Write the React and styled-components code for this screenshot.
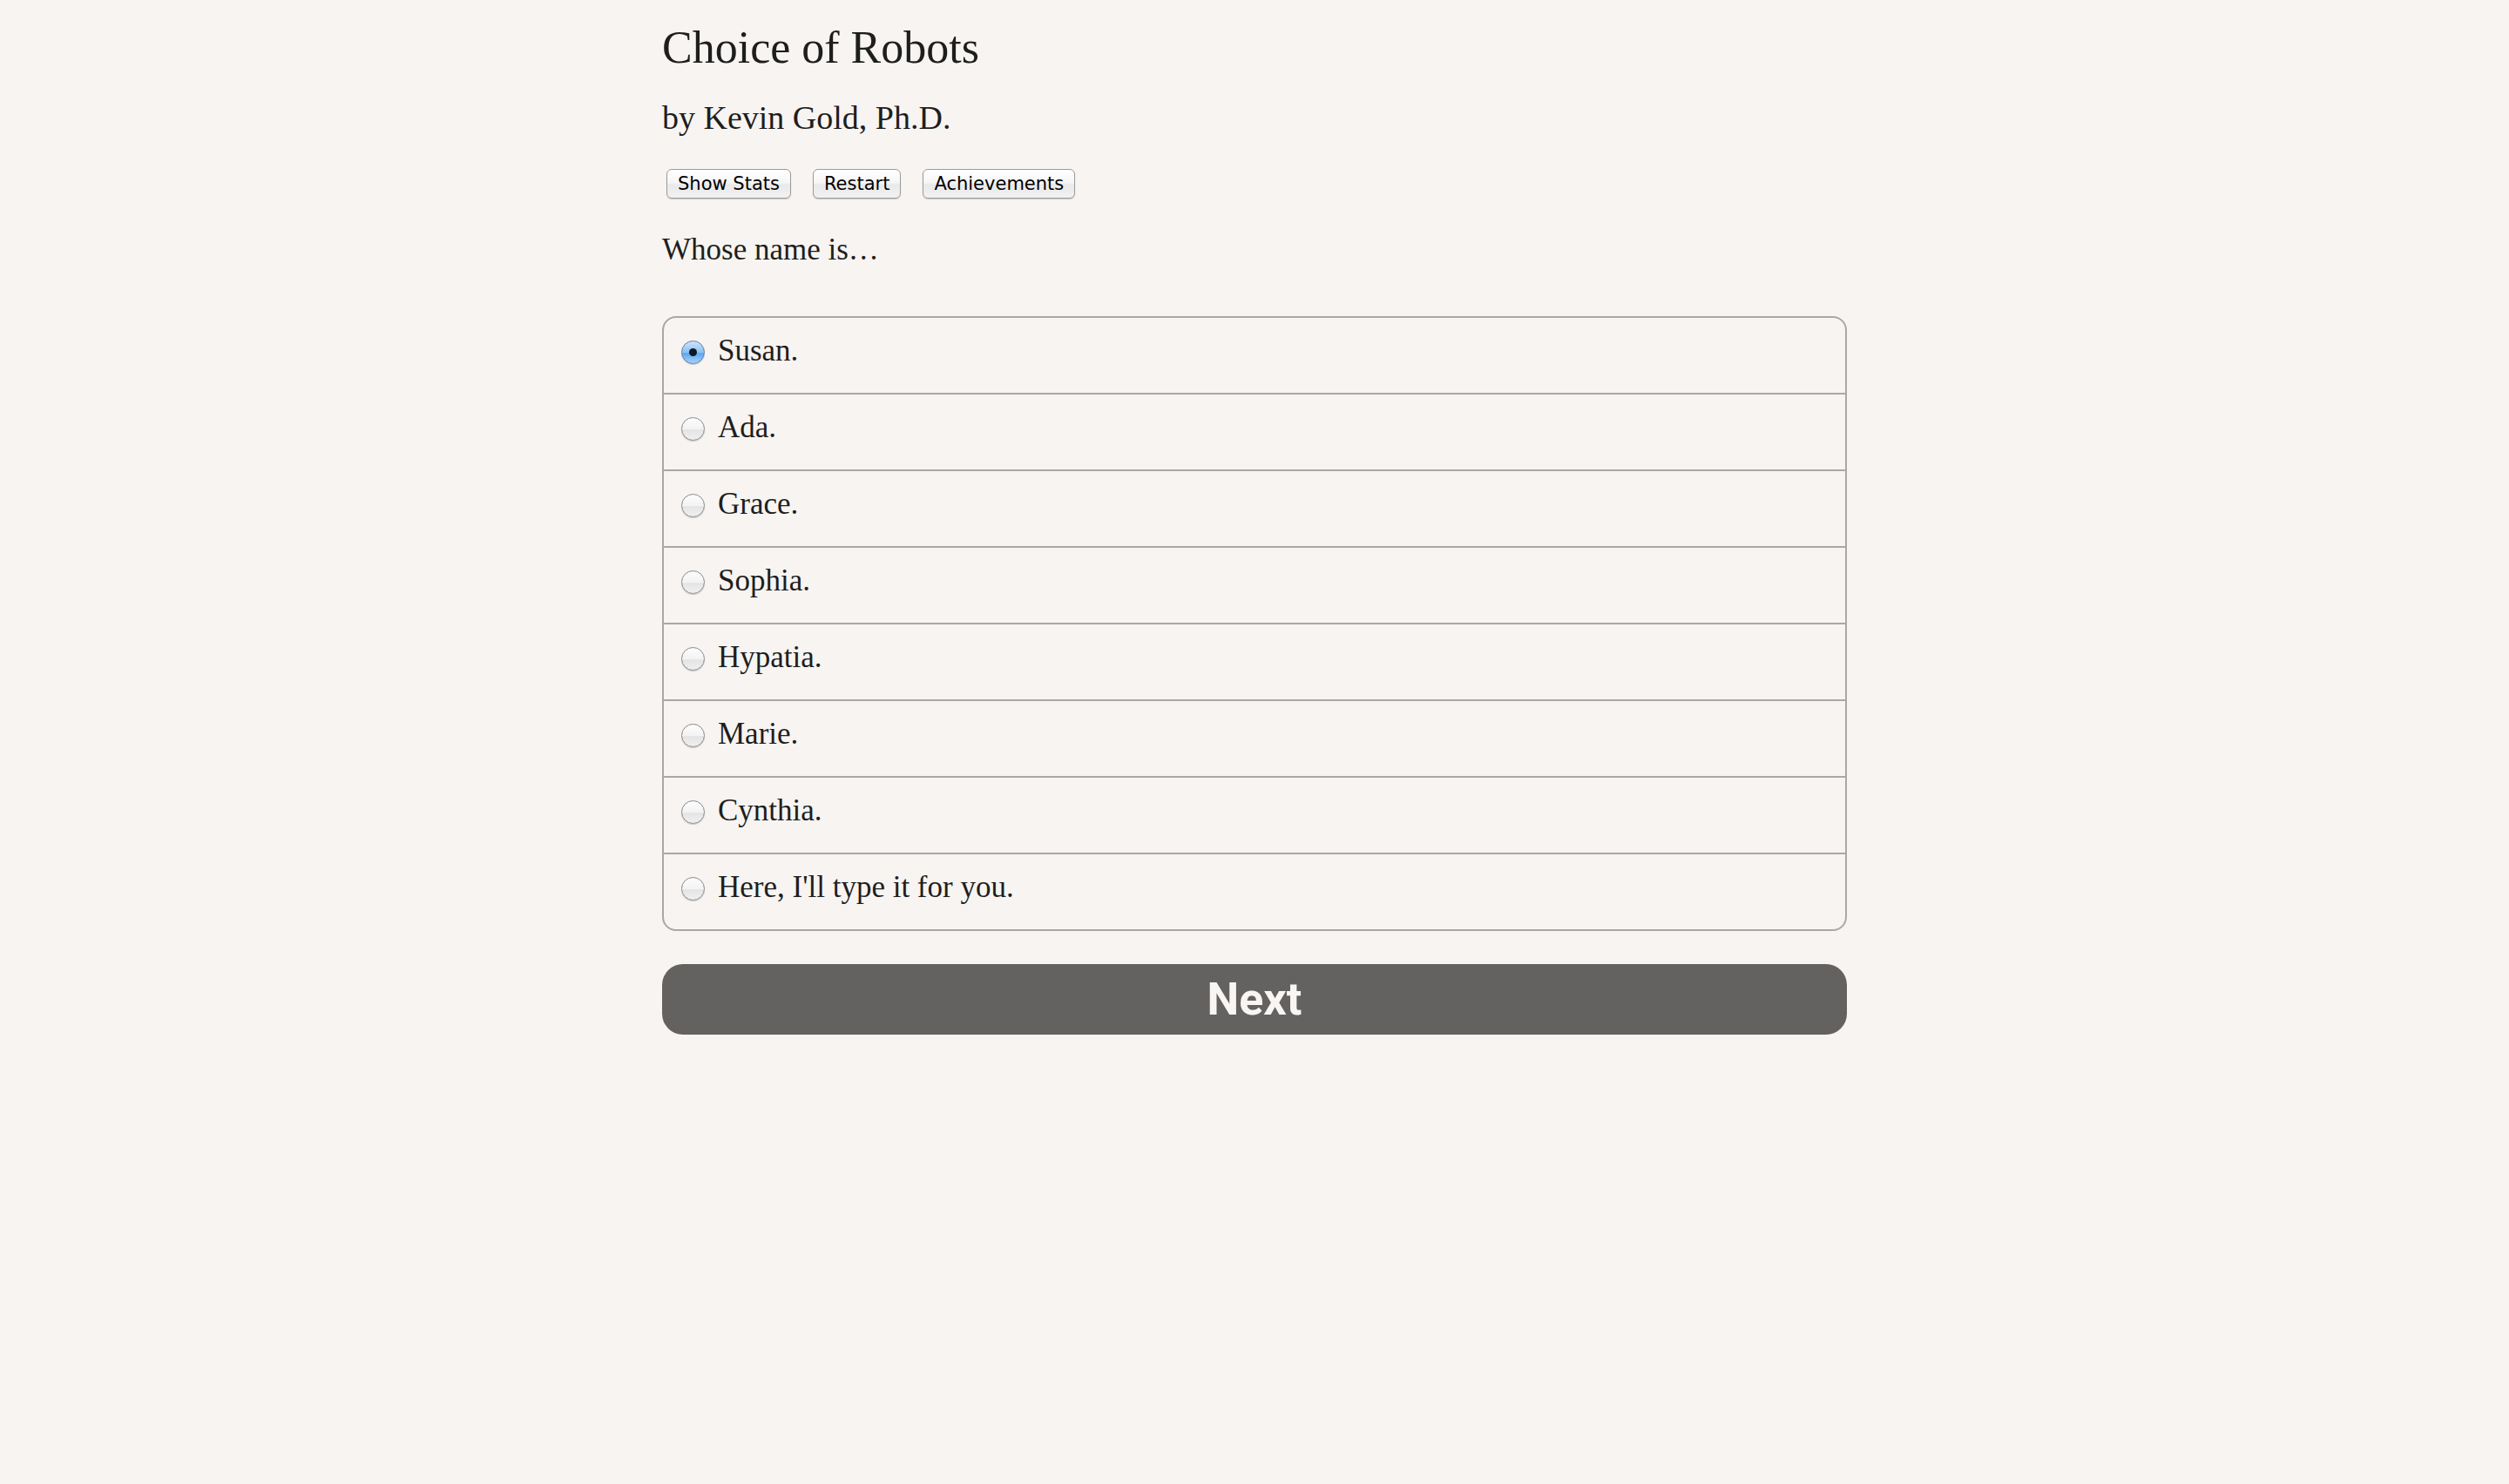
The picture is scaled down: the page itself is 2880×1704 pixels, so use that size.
import React, { useState } from 'react';
import styled, { createGlobalStyle } from 'styled-components';

const GlobalStyle = createGlobalStyle`
  html, body {
    margin: 0;
    padding: 0;
    background: #f7f4f1;
  }
  body {
    color: #1e1e1e;
    font-family: "Liberation Serif", "Times New Roman", serif;
  }
`;

const StyledPage = styled.div`
  width: 1360px;
  margin: 0 auto;
  padding-top: 24px;
  padding-bottom: 200px;
`;

const Title = styled.h1`
  margin: 0;
  font-size: 52px;
  font-weight: normal;
  line-height: 62px;
`;

const Author = styled.h2`
  margin: 26px 0 0;
  font-size: 38px;
  font-weight: normal;
  line-height: 46px;
`;

const Toolbar = styled.div`
  display: flex;
  gap: 25px;
  margin: 36px 0 0 5px;
`;

const ToolButton = styled.button`
  height: 34px;
  padding: 0 12px;
  font-family: "DejaVu Sans", "Liberation Sans", Arial, sans-serif;
  font-size: 21px;
  color: #000;
  background: linear-gradient(#ffffff 0%, #f6f6f6 45%, #e9e9e9 55%, #f2f2f2 100%);
  border: 1px solid #9b9b9b;
  border-radius: 6px;
  box-shadow: 0 1px 1px rgba(0, 0, 0, 0.18);
  cursor: pointer;
`;

const Prompt = styled.p`
  margin: 34px 0 0;
  font-size: 35px;
  line-height: 49px;
`;

const ChoiceList = styled.div`
  margin-top: 52px;
  border: 2px solid #a8a8a8;
  border-radius: 16px;
  overflow: hidden;
`;

const ChoiceRow = styled.label`
  display: flex;
  align-items: center;
  gap: 15px;
  height: 74px;
  padding: 0 20px 12px;
  font-size: 35px;
  line-height: 49px;
  cursor: pointer;

  &:not(:last-child) {
    border-bottom: 2px solid #a8a8a8;
  }
`;

const Radio = styled.input.attrs({ type: 'radio' })`
  appearance: none;
  -webkit-appearance: none;
  flex: none;
  width: 27px;
  height: 27px;
  margin: 4px 0 0;
  border-radius: 50%;
  border: 1px solid #8a8a8a;
  background: linear-gradient(#fdfdfd 0%, #f3f3f3 50%, #e4e4e4 55%, #f0f0f0 100%);
  box-shadow: 0 1px 1px rgba(0, 0, 0, 0.18);
  box-sizing: border-box;
  position: relative;

  &:checked {
    border-color: #5b7fa8;
    background: linear-gradient(#cfe5fb 0%, #8dc0f3 50%, #5ea6ee 55%, #a6d3fb 100%);
  }

  &:checked::after {
    content: "";
    position: absolute;
    left: 50%;
    top: 50%;
    width: 9px;
    height: 9px;
    margin: -4.5px 0 0 -4.5px;
    border-radius: 50%;
    background: #0d1826;
  }
`;

const NextButton = styled.button`
  display: block;
  width: 100%;
  height: 81px;
  margin-top: 38px;
  padding: 0;
  border: none;
  border-radius: 24px;
  background: #636260;
  color: #f8f5f2;
  font-family: Roboto, "Liberation Sans", Arial, sans-serif;
  font-weight: bold;
  font-size: 52px;
  line-height: 81px;
  cursor: pointer;
`;

const names = [
  'Susan.',
  'Ada.',
  'Grace.',
  'Sophia.',
  'Hypatia.',
  'Marie.',
  'Cynthia.',
  "Here, I'll type it for you.",
];

export default function App() {
  const [picked, setPicked] = useState(0);

  return (
    <>
      <GlobalStyle />
      <StyledPage>
        <Title>Choice of Robots</Title>
        <Author>by Kevin Gold, Ph.D.</Author>
        <Toolbar>
          <ToolButton>Show Stats</ToolButton>
          <ToolButton>Restart</ToolButton>
          <ToolButton>Achievements</ToolButton>
        </Toolbar>
        <Prompt>Whose name is…</Prompt>
        <ChoiceList>
          {names.map((name, i) => (
            <ChoiceRow key={name}>
              <Radio name="choice" checked={picked === i} onChange={() => setPicked(i)} />
              {name}
            </ChoiceRow>
          ))}
        </ChoiceList>
        <NextButton>Next</NextButton>
      </StyledPage>
    </>
  );
}
